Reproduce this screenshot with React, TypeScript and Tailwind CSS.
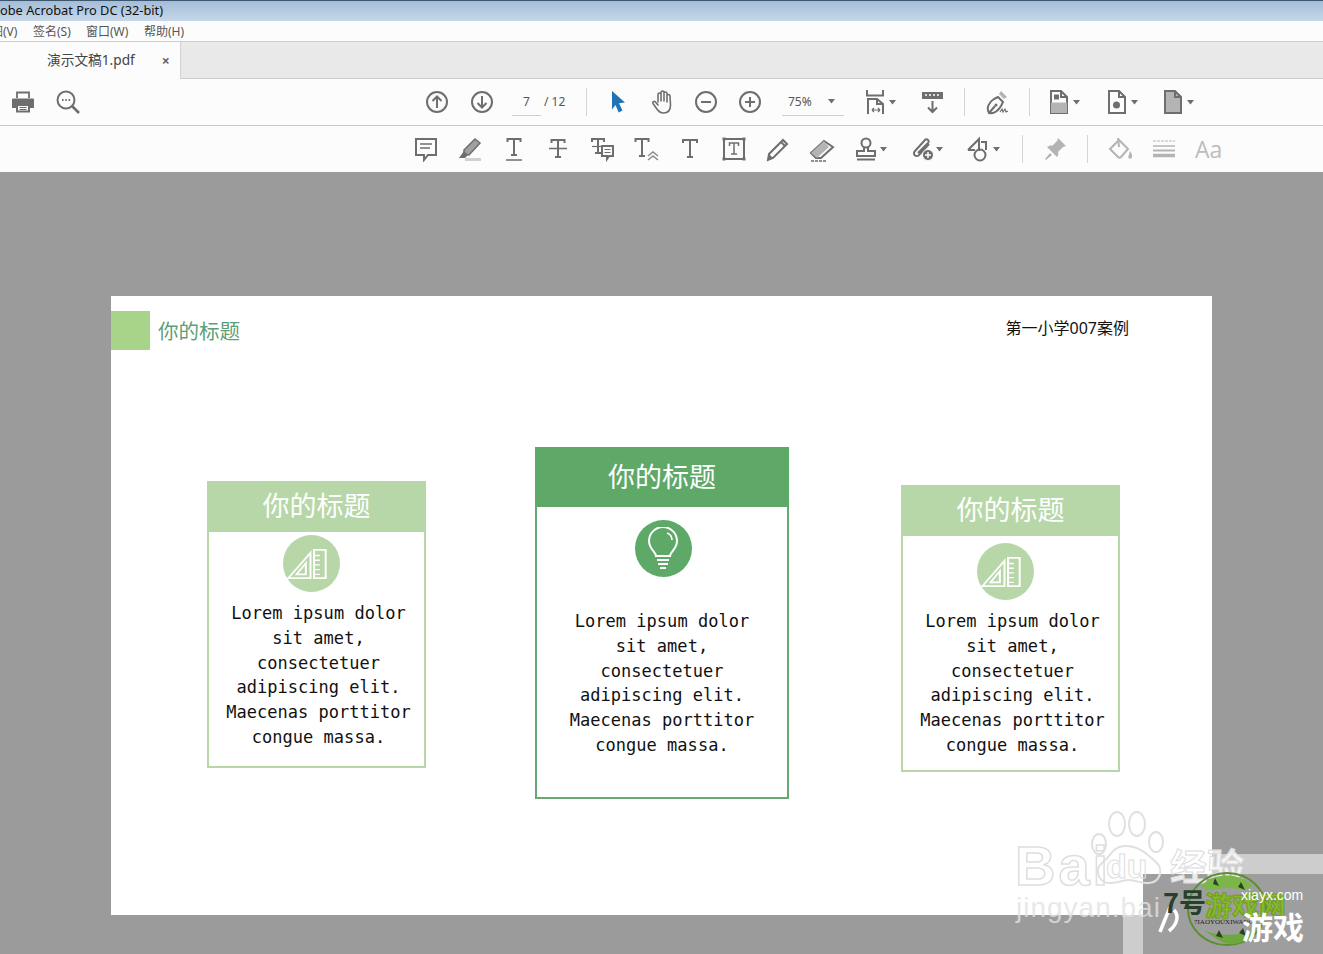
import { ReactNode } from 'react';

const GRAY = '#6e6e6e';
const FAINT = '#b4b4b4';
const cjk = "font-['Noto_Sans','Noto_Sans_CJK_SC',sans-serif]";

const Caret = ({ color = GRAY }: { color?: string }) => (
  <svg width="8" height="5" viewBox="0 0 8 5" className="shrink-0">
    <path d="M0 0h7L3.5 4.5z" fill={color} />
  </svg>
);

const Ico = ({ children }: { children: ReactNode }) => (
  <svg width="26" height="26" viewBox="0 0 26 26" fill="none" stroke={GRAY} strokeWidth="2" className="shrink-0">
    {children}
  </svg>
);

// one toolbar button, 44px wide unless told otherwise
const Slot = ({ children, className = 'w-[44px]' }: { children: ReactNode; className?: string }) => (
  <div className={`flex items-center justify-center shrink-0 gap-[1px] ${className}`}>{children}</div>
);

const Sep = () => <div className="w-[1px] h-[28px] bg-[#d4d4d4] shrink-0" />;

// serif-looking T used by the text markup tools
const TGlyph = ({ x = 13, y = 4, w = 14, h = 15, sw = 2 }: { x?: number; y?: number; w?: number; h?: number; sw?: number }) => (
  <g stroke={GRAY} strokeWidth={sw}>
    <path d={`M${x - w / 2} ${y + 3}V${y}H${x + w / 2}V${y + 3}`} />
    <path d={`M${x} ${y}V${y + h}M${x - 3} ${y + h}H${x + 3}`} />
  </g>
);

const TopTools = () => (
  <div className="h-[46px] bg-[#fcfcfc] border-b border-[#c9c9c9] flex items-center box-content">
    <Slot className="w-[46px]">
      <Ico>
        <path d="M7 9V3.500h12V9" strokeWidth="1.800" />
        <path d="M3 9.500h20a1 1 0 0 1 1 1V19h-4v-4H6v4H2v-8.500a1 1 0 0 1 1-1z" fill={GRAY} stroke="none" />
        <path d="M7 16h12v6.500H7z" strokeWidth="2" />
        <path d="M9.500 18.500h7M9.500 20.500h7" strokeWidth="1" />
      </Ico>
    </Slot>
    <Slot className="w-[44px]">
      <Ico>
        <circle cx="11" cy="11" r="8.500" />
        <path d="M17 17l7 7" strokeWidth="2.600" />
        <path d="M7 11h1.500M10.300 11h1.500M13.600 11h1.500" strokeWidth="1.800" />
      </Ico>
    </Slot>
    <div className="w-[324px] shrink-0" />
    <Slot className="w-[45px]">
      <Ico>
        <circle cx="13" cy="13" r="10" />
        <path d="M13 19V7.500M8.500 12L13 7.500l4.500 4.500" />
      </Ico>
    </Slot>
    <Slot className="w-[45px]">
      <Ico>
        <circle cx="13" cy="13" r="10" />
        <path d="M13 7v11.500M8.500 14l4.500 4.500 4.500-4.500" />
      </Ico>
    </Slot>
    <div className={`flex items-center w-[82px] shrink-0 text-[12px] text-[#555] pl-[8px] ${cjk}`}>
      <div className="w-[29px] h-[27px] border-b border-[#cfcfcf] flex items-center justify-center">7</div>
      <span className="ml-[3px]">/ 12</span>
    </div>
    <Sep />
    <Slot className="w-[62px]">
      <svg width="18" height="24" viewBox="0 0 18 24" className="shrink-0">
        <path d="M3 1l13 11.500-6 .800 3.500 7.200-3.800 2-3.200-7.500L3 19.500z" fill="#1f73b7" />
      </svg>
    </Slot>
    <Slot className="w-[42px] -ml-[7px]">
      <svg width="26" height="26" viewBox="0 0 26 26" fill="none" stroke={GRAY} strokeWidth="1.600" strokeLinecap="round" className="shrink-0">
        <path d="M8 13V5.500a1.500 1.500 0 0 1 3 0V12M11 11V3.500a1.500 1.500 0 0 1 3 0V12M14 11.500V4.500a1.500 1.500 0 0 1 3 0V13M17 12V7a1.500 1.500 0 0 1 3 0l.5 9c0 5-2.500 8-7 8-3.500 0-5-1.500-7-4.500L3 14.500c-1-1.500 1-3 2.500-1.500L8 16" />
      </svg>
    </Slot>
    <Slot>
      <Ico>
        <circle cx="13" cy="13" r="10" />
        <path d="M8 13h10" />
      </Ico>
    </Slot>
    <Slot>
      <Ico>
        <circle cx="13" cy="13" r="10" />
        <path d="M8 13h10M13 8v10" />
      </Ico>
    </Slot>
    <div className={`flex items-center justify-between w-[62px] ml-[10px] h-[27px] border-b border-[#cfcfcf] text-[12px] text-[#555] pl-[6px] pr-[8px] shrink-0 ${cjk}`}>
      <span>75%</span>
      <Caret />
    </div>
    <Slot className="w-[64px] pl-[6px]">
      <Ico>
        <g transform="translate(2 0)">
          <path d="M3 1v5.500h16V1" />
          <path d="M4 25V10h9l6 5v10M13 10v5h6" />
          <path d="M8 21h8M8 21l2-2M8 21l2 2M16 21l-2-2M16 21l-2 2" strokeWidth="1.200" />
        </g>
      </Ico>
      <Caret />
    </Slot>
    <Slot className="w-[49px]">
      <Ico>
        <path d="M2 3h21v7H2z" fill={GRAY} stroke="none" />
        <path d="M5 6h2M9 6h2M13 6h2M17 6h2" stroke="#fff" strokeWidth="1.500" />
        <path d="M12.500 12v11M8 18.500l4.500 4.500 4.500-4.500" />
      </Ico>
    </Slot>
    <div className="w-[7px] shrink-0" />
    <Sep />
    <Slot className="w-[64px]">
      <Ico>
        <path d="M5 24c-3-5 0-11 5-14l4-2 5 5-2 4c-3 5-7 8-12 7zM5 24l6-7" />
        <circle cx="12" cy="16" r="1.500" fill={GRAY} stroke="none" />
        <path d="M15 5l2-3 6 6-3 2z" fill={FAINT} stroke="none" />
        <path d="M16 23l2-3 1 3 2-3 1 3 2-1" strokeWidth="1.200" />
      </Ico>
    </Slot>
    <Sep />
    <Slot className="w-[59px] ml-[4px]">
      <Ico>
        <path d="M5 2h10l6 6v16H5z" />
        <path d="M15 2v6h6" />
        <path d="M5 13.500h16V24H5z" fill={FAINT} stroke="none" />
        <path d="M8 5.500h5v5H8z" fill={GRAY} stroke="none" />
      </Ico>
      <Caret />
    </Slot>
    <Slot className="w-[56px]">
      <Ico>
        <path d="M5 2h10l6 6v16H5z" />
        <path d="M15 2v6h6" />
        <circle cx="12.500" cy="16" r="3.500" fill={GRAY} stroke="none" />
      </Ico>
      <Caret />
    </Slot>
    <Slot className="w-[56px]">
      <Ico>
        <path d="M5 2h10l6 6v16H5z" fill={FAINT} />
        <path d="M15 2v6h6" />
      </Ico>
      <Caret />
    </Slot>
  </div>
);

const BottomTools = () => (
  <div className="h-[46px] bg-[#fcfcfc] flex items-center pl-[404px]">
    <Slot>
      <Ico>
        <path d="M3 3h20v16h-8l-4 5v-5H3z" />
        <path d="M7 8h12M7 12h10" strokeWidth="1.500" />
      </Ico>
    </Slot>
    <Slot>
      <svg width="26" height="26" viewBox="0 0 26 26" className="shrink-0">
        <path d="M7 14L18 3l5 4-11 12-5-1z" fill="#a0a0a0" stroke={GRAY} strokeWidth="1.500" />
        <path d="M7 15l4 4-3 3-6 0z" fill={GRAY} />
        <path d="M8 22h16v3H8z" fill="#d0d0d0" />
      </svg>
    </Slot>
    <Slot>
      <Ico>
        <TGlyph x={13} y={3} w={13} h={16} />
        <path d="M5 24h16" strokeWidth="1.500" />
      </Ico>
    </Slot>
    <Slot>
      <Ico>
        <TGlyph x={13} y={4} w={13} h={17} />
        <path d="M4 12.500h18" strokeWidth="1.500" />
      </Ico>
    </Slot>
    <Slot>
      <Ico>
        <TGlyph x={9} y={3} w={12} h={14} />
        <path d="M3 10.500h13" strokeWidth="1.200" />
        <path d="M13 10h11v10h-4l-2 3v-3h-5z" fill="#fcfcfc" />
        <path d="M15.500 13.500h6M15.500 16.500h6" strokeWidth="1.200" />
      </Ico>
    </Slot>
    <Slot>
      <Ico>
        <TGlyph x={9} y={3} w={13} h={17} />
        <path d="M15 20l5-4 5 4M15 24l5-4 5 4" strokeWidth="1.500" stroke="#8a8a8a" />
      </Ico>
    </Slot>
    <Slot>
      <Ico>
        <TGlyph x={13} y={4} w={14} h={17} />
      </Ico>
    </Slot>
    <Slot>
      <Ico>
        <path d="M3 3h20v20H3z" />
        <TGlyph x={13} y={7} w={9} h={11} sw={1.500} />
        <path d="M1.500 1.500h3v3h-3zM21.500 1.500h3v3h-3zM1.500 21.500h3v3h-3zM21.500 21.500h3v3h-3z" fill={GRAY} stroke="none" />
      </Ico>
    </Slot>
    <Slot>
      <Ico>
        <path d="M4 18L18 4l4 4L8 22l-5 2z" />
        <path d="M4 18l4 4-5 2z" fill={GRAY} stroke="none" />
        <path d="M16 6l4 4" />
      </Ico>
    </Slot>
    <Slot>
      <Ico>
        <path d="M2 17L15 5l9 6-12 11H7z" />
        <path d="M2 17l6 5 12-11-5-6z" fill={FAINT} stroke="none" />
        <path d="M2 25h16" strokeWidth="1.300" strokeDasharray="3 1" />
      </Ico>
    </Slot>
    <Slot className="w-[53px]">
      <Ico>
        <circle cx="13" cy="7" r="4.500" />
        <path d="M11 11v4H4v5h18v-5h-7v-4M4 23.500h18" />
      </Ico>
      <Caret />
    </Slot>
    <Slot className="w-[58px]">
      <Ico>
        <path d="M20 8L10 19c-3 3-7-1-4-4L16 4c2-2 5 1 3 3L9 17" />
        <circle cx="19" cy="19" r="5.500" fill={GRAY} stroke="#fcfcfc" strokeWidth="1" />
        <path d="M16 19h6M19 16v6" stroke="#fff" strokeWidth="1.500" />
      </Ico>
      <Caret />
    </Slot>
    <Slot className="w-[56px]">
      <Ico>
        <path d="M2 14L13 3v12" />
        <path d="M2 14h7M15 6h5v8" />
        <circle cx="14" cy="19" r="5.500" />
      </Ico>
      <Caret />
    </Slot>
    <div className="w-[11px] shrink-0" />
    <Sep />
    <Slot className="w-[64px]">
      <svg width="26" height="26" viewBox="0 0 26 26" fill={FAINT} className="shrink-0">
        <path d="M16 2l8 8-3 1-5 5c1 2 0 4-1 5L5 11c2-1 4-2 5-1l5-5z" />
        <path d="M8 17l-5 6 1 1 6-5z" />
      </svg>
    </Slot>
    <Sep />
    <Slot className="w-[65px]">
      <svg width="26" height="26" viewBox="0 0 26 26" fill="none" stroke={FAINT} strokeWidth="2" className="shrink-0">
        <path d="M2 13L11 4l9 9-7 8a2 2 0 0 1-3 0z" />
        <path d="M10 2l1 9" />
        <path d="M22 15c2 3 3 5 1.500 7s-4 0-3-2z" fill={FAINT} stroke="none" />
      </svg>
    </Slot>
    <Slot className="w-[22px]">
      <svg width="22" height="18" viewBox="0 0 22 18" fill="none" stroke={FAINT} className="shrink-0">
        <path d="M0 1h22" strokeWidth="1" strokeDasharray="3 1" />
        <path d="M0 6h22" strokeWidth="1.500" />
        <path d="M0 10.500h22" strokeWidth="2" />
        <path d="M0 15.500h22" strokeWidth="3.500" />
      </svg>
    </Slot>
    <div className="ml-[20px] shrink-0 text-[23px] leading-none text-[#bdbdbd] font-['Open_Sans',sans-serif]">Aa</div>
  </div>
);

const RulerIcon = () => (
  <svg width="42" height="32" viewBox="0 0 36 34" preserveAspectRatio="none" fill="none" stroke="#fff" strokeWidth="1.700" className="-ml-[8px] shrink-0">
    <path d="M2 32L21 5v27z" />
    <path d="M9 28l8-12v12z" />
    <path d="M24 2h10v30H24z" />
    <path d="M24 8h5M24 13h5M24 18h5M24 23h5M24 28h5" strokeWidth="1.400" />
  </svg>
);

const BulbIcon = () => (
  <svg width="34" height="44" viewBox="0 0 34 44" fill="none" stroke="#fff" strokeWidth="2" className="shrink-0">
    <path d="M10 29c0-4-7-7-7-15a14 14 0 0 1 28 0c0 8-7 11-7 15z" />
    <path d="M21 6c3 1 5 4 5 7" strokeWidth="1.700" />
    <path d="M11 33h12M12 37h10M14 41h6" />
  </svg>
);

type CardProps = {
  title: string;
  icon: ReactNode;
  boxClass: string;
  headClass: string;
  iconClass: string;
  circleClass: string;
  textClass: string;
};

const Card = ({ title, icon, boxClass, headClass, iconClass, circleClass, textClass }: CardProps) => (
  <div className={`shrink-0 box-border border-2 ${boxClass}`}>
    <div className={`-mx-[2px] -mt-[2px] flex items-center justify-center text-white text-[27px] ${cjk} ${headClass}`}>
      {title}
    </div>
    <div className={`flex justify-center ${iconClass}`}>
      <div className={`w-[57px] h-[57px] rounded-full flex items-center justify-center ${circleClass}`}>{icon}</div>
    </div>
    <p className={`text-center text-[17px] leading-[24.8px] tracking-[0.02px] text-[#111] font-['DejaVu_Sans_Mono',monospace] ${textClass}`}>
      Lorem ipsum dolor
      <br />
      sit amet,
      <br />
      consectetuer
      <br />
      adipiscing elit.
      <br />
      Maecenas porttitor
      <br />
      congue massa.
    </p>
  </div>
);

const Slide = () => (
  <div className="ml-[111px] mt-[124px] w-[1101px] h-[619px] bg-white">
    <div className="h-[151px] flex items-start pt-[15px]">
      <div className="w-[39px] h-[39px] bg-[#a8d48a]" />
      <div className={`ml-[8px] mt-[5px] text-[20.500px] leading-[30px] text-[#5f9f78] ${cjk}`}>你的标题</div>
      <div className={`ml-auto mr-[83px] mt-[2px] text-[16px] leading-[30px] text-[#111] ${cjk}`}>第一小学007案例</div>
    </div>
    <div className="flex items-start pl-[96px]">
      <Card
        title="你的标题"
        icon={<RulerIcon />}
        boxClass="w-[219px] h-[287px] mt-[34px] border-[#b7d7a8]"
        headClass="h-[51px] bg-[#b7d7a8]"
        iconClass="pt-[3px] pr-[11px]"
        circleClass="bg-[#b7d7a8]"
        textClass="mt-[9px] pl-[4px]"
      />
      <Card
        title="你的标题"
        icon={<BulbIcon />}
        boxClass="w-[254px] h-[352px] ml-[109px] border-[#67a874]"
        headClass="h-[60px] bg-[#5ea868]"
        iconClass="pt-[13px] pl-[2px]"
        circleClass="bg-[#5ea868]"
        textClass="mt-[32px]"
      />
      <Card
        title="你的标题"
        icon={<RulerIcon />}
        boxClass="w-[219px] h-[287px] ml-[112px] mt-[38px] border-[#b7d7a8]"
        headClass="h-[51px] bg-[#b7d7a8]"
        iconClass="pt-[7px] pr-[11px]"
        circleClass="bg-[#b7d7a8]"
        textClass="mt-[9px] pl-[4px]"
      />
    </div>
  </div>
);

// pasted-on site stamp in the bottom right corner, sits over everything
const Watermarks = () => (
  <>
    <div className="absolute left-[1123px] top-[854px] w-[200px] h-[100px] bg-white/50 pl-[20px] pt-[20px]">
      <div className="w-[180px] h-[80px] bg-[#9e9e9e]" />
    </div>
    <svg className="absolute left-[1085px] top-[810px]" width="84" height="78" viewBox="0 0 84 78" fill="none" stroke="#e0e0e0" strokeWidth="2">
      <path d="M40 36c-12 0-14 10-22 16-10 8-4 22 8 21 8 0 12-3 18-3 8 0 12 4 20 3 11-1 15-13 7-21-8-7-16-16-31-16z" />
      <ellipse cx="14" cy="34" rx="7" ry="10" />
      <ellipse cx="32" cy="14" rx="8" ry="12" />
      <ellipse cx="52" cy="14" rx="8" ry="12" />
      <ellipse cx="71" cy="32" rx="7" ry="10" />
    </svg>
    <div className="absolute left-[1015px] top-[830px] text-[56px] leading-[72px] font-bold tracking-[3px] text-transparent [-webkit-text-stroke:1.500px_#dedede] font-['Liberation_Sans',sans-serif]">
      Bai
    </div>
    <div className="absolute left-[1106px] top-[844px] text-[34px] leading-[44px] font-bold text-transparent [-webkit-text-stroke:1px_#dedede] font-['Liberation_Sans',sans-serif]">
      du
    </div>
    <div className="absolute left-[1170px] top-[843px] text-[37px] leading-[44px] font-bold text-white/80 [-webkit-text-stroke:1px_#dcdcdc] font-['Noto_Sans_CJK_SC',sans-serif]">
      经验
    </div>
    <div className="absolute left-[1016px] top-[890px] text-[28px] leading-[36px] text-[#e2e2e2]/80 tracking-[1px] font-['Liberation_Sans',sans-serif]">
      jingyan.bai
    </div>
    <svg className="absolute left-[1185px] top-[870px]" width="84" height="78" viewBox="0 0 84 78" fill="none">
      <ellipse cx="42" cy="39" rx="39" ry="36" stroke="#5c8f32" strokeWidth="2" />
      <path d="M16 16c14-14 38-14 52 0-8 6-16 2-26 2s-18 6-26-2z" fill="#7ab648" />
      <path d="M14 58c14 6 18 14 30 16 12 1 24-6 28-16-14 8-40 10-58 0z" fill="#6da83e" />
      <path d="M30 8l4 8-6-2zM56 12l4 8-7-3zM34 60l4 8-7-2zM58 58l3 8-7-3z" fill="#2f3f22" />
    </svg>
    <svg className="absolute left-[1158px] top-[905px]" width="40" height="32" viewBox="0 0 40 32" fill="none" stroke="#fff" strokeWidth="3.500">
      <path d="M12 2C9 10 5 19 2 27M16 5c5 5 4 14-5 21" />
    </svg>
    <div className="absolute left-[1163px] top-[884px] text-[27px] leading-[36px] font-bold text-[#27402b] font-['Noto_Sans_CJK_SC',sans-serif]">
      7号
    </div>
    <div className="absolute left-[1205px] top-[888px] text-[27px] leading-[34px] font-bold text-[#86bb2a] [-webkit-text-stroke:1px_#6f9e1f] font-['Noto_Sans_CJK_SC',sans-serif]">
      游戏网
    </div>
    <div className="absolute left-[1241px] top-[886px] text-[14px] leading-[18px] text-white font-['Liberation_Sans',sans-serif]">
      xiayx.com
    </div>
    <div className="absolute left-[1194px] top-[918px] text-[7px] leading-[9px] text-[#222] font-['Liberation_Serif',serif]">
      7IAOYOUXIWANG
    </div>
    <div className="absolute left-[1242px] top-[906px] text-[31px] leading-[40px] font-bold text-white font-['Noto_Sans_CJK_SC',sans-serif]">
      游戏
    </div>
  </>
);

export default function App() {
  return (
    <div className={`relative w-[1323px] h-[954px] overflow-hidden bg-[#9b9b9b] ${cjk}`}>
      <div className="h-[21px] bg-gradient-to-b from-[#a4bdd8] to-[#c6d7e9] border-t border-[#3e5670] text-[12.800px] leading-[19px] text-[#111] whitespace-nowrap">
        obe Acrobat Pro DC (32-bit)
      </div>
      <div className="h-[21px] pt-[1px] bg-[#fcfcfc] border-b border-[#cfcfcf] flex items-center text-[12px] text-[#555] whitespace-nowrap overflow-hidden">
        <span className="-ml-[21px] w-[54px] shrink-0">视图(V)</span>
        <span className="w-[53px] shrink-0">签名(S)</span>
        <span className="w-[58px] shrink-0">窗口(W)</span>
        <span>帮助(H)</span>
      </div>
      <div className="h-[37px] bg-[#e9e9e9] border-b border-[#cdcdcd] flex">
        <div className="w-[181px] h-[37px] bg-[#fcfcfc] border-r border-[#d2d2d2] flex items-center pl-[47px] text-[13.700px] text-[#444]">
          <span>演示文稿1.pdf</span>
          <span className="ml-[27px] text-[14px] font-bold text-[#666]">×</span>
        </div>
      </div>
      <TopTools />
      <BottomTools />
      <Slide />
      <Watermarks />
    </div>
  );
}
